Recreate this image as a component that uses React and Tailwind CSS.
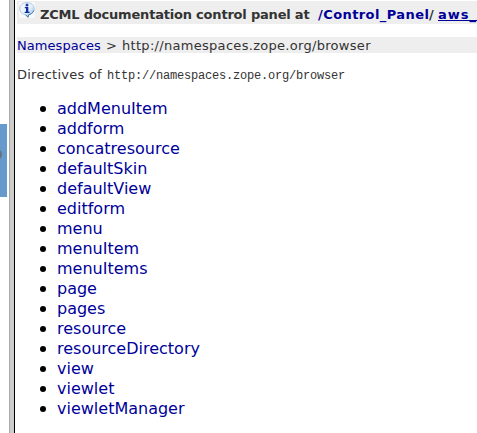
const directives = [
  'addMenuItem',
  'addform',
  'concatresource',
  'defaultSkin',
  'defaultView',
  'editform',
  'menu',
  'menuItem',
  'menuItems',
  'page',
  'pages',
  'resource',
  'resourceDirectory',
  'view',
  'viewlet',
  'viewletManager',
];

function InfoIcon() {
  return (
    <svg className="block h-4 w-4 shrink-0" viewBox="0 0 16 16">
      <defs>
        <linearGradient id="bubble" x1="0" y1="0" x2="1" y2="1">
          <stop offset="0" stopColor="#ffffff" />
          <stop offset="0.55" stopColor="#e4f0fa" />
          <stop offset="1" stopColor="#82b4e0" />
        </linearGradient>
      </defs>
      <rect width="16" height="16" fill="#f8f8f8" />
      <path
        d="M8 .6C3.9.6.8 3.3.8 6.8c0 3 2.2 5.200 5.200 5.900.9.2 1.600 1.400 2.900 2.700.1-1.100-.1-2 .8-2.500 3.200-.7 5.500-3.100 5.500-6.100C15.200 3.300 12.100.6 8 .6Z"
        fill="url(#bubble)"
        stroke="#9dbdd9"
        strokeWidth="0.8"
      />
      <path d="M14.800 8.500C14 11 11.500 12.300 9.600 12.800L9 15.200 6.700 12.800" fill="none" stroke="#397dad" strokeWidth="1" />
      <circle cx="8" cy="2.900" r="1.500" fill="#1c3fae" />
      <path d="M5.800 5h3.500v4.800h1.200V11H5.700V9.800H7V6.200H5.800Z" fill="#102f9c" />
    </svg>
  );
}

export default function App() {
  return (
    <div className="flex h-[433px] w-[477px] overflow-hidden bg-white font-['DejaVu_Sans',sans-serif] text-[#333333]">
      <div className="w-[9px] shrink-0 pt-[124px]">
        <div className="flex h-[73px] w-[7px] items-center overflow-hidden bg-[#6699cc] pb-[13px]">
          <div className="-ml-[9px] h-[11px] w-[11px] shrink-0 rounded-full border-2 border-[#66727c] bg-[#999999]" />
        </div>
      </div>
      <div className="w-[6px] shrink-0 border-l border-r border-l-[#aaaaaa] border-r-black bg-[#cccccc]" />
      <main className="ml-[2px] w-[460px] shrink-0 pt-px">
        <h1 className="flex h-[23px] items-start overflow-hidden bg-[#eeeeee] pl-[2px] pt-px text-[13px] font-bold whitespace-nowrap">
          <InfoIcon />
          <span className="ml-[5px] w-[278px] shrink-0 pt-[5px] leading-4 tracking-[-0.2px]">ZCML documentation control panel at</span>
          <a className="w-[111px] shrink-0 pt-[5px] leading-4 tracking-[0.42px] text-[#000099]">/Control_Panel</a>
          <span className="w-[9px] shrink-0 pt-[5px] leading-4">/</span>
          <a className="shrink-0 pt-[5px] leading-4 tracking-[1px] text-[#000099] underline">aws_</a>
        </h1>
        <nav className="mt-[13px] flex h-4 items-center bg-[#eeeeee] pt-[2px] text-[13px] leading-4 whitespace-nowrap">
          <a className="w-[89px] tracking-[0.05px] text-[#000099]">Namespaces</a>
          <span className="w-4">&gt;</span>
          <span className="tracking-[0.3px]">http://namespaces.zope.org/browser</span>
        </nav>
        <p className="mt-[14px] flex h-4 items-center text-[13px] leading-4 whitespace-nowrap">
          <span className="w-[90px] tracking-[0.25px]">Directives of</span>
          <code className="pt-px font-['Liberation_Mono',monospace] text-[12px] leading-4 tracking-[-0.2px]">http://namespaces.zope.org/browser</code>
        </p>
        <ul className="mt-4 text-base leading-5">
          {directives.map((name) => (
            <li key={name} className="flex h-5 items-center">
              <span className="mr-[11px] ml-[23px] h-[6px] w-[6px] rounded-full bg-black" />
              <a className="text-[#000099]">{name}</a>
            </li>
          ))}
        </ul>
      </main>
    </div>
  );
}
